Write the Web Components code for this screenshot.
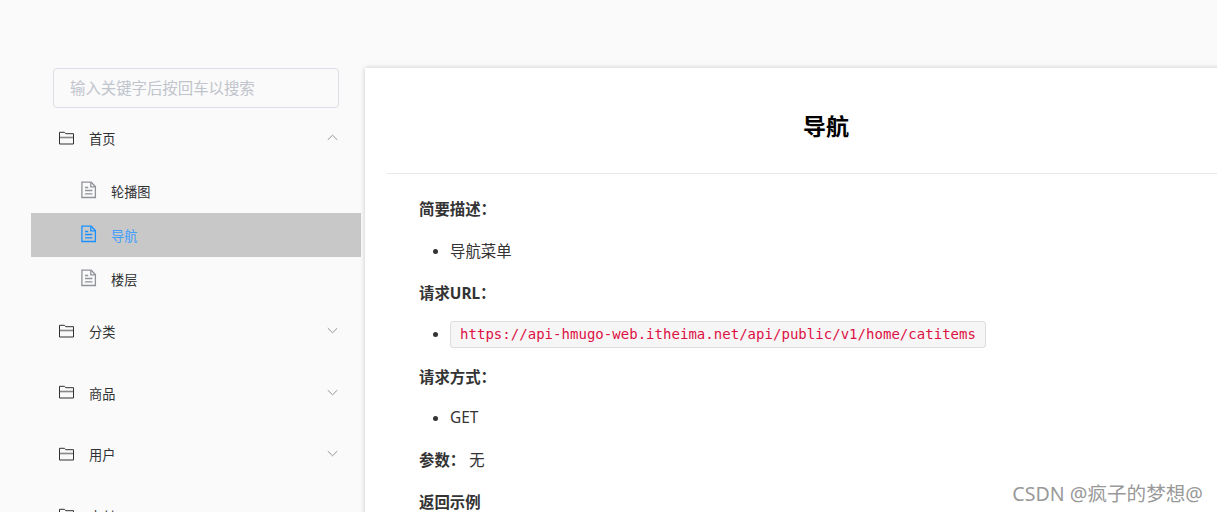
<!DOCTYPE html>
<html lang="zh-CN">
<head>
<meta charset="utf-8">
<title>导航</title>
<style>
  html, body {
    margin: 0;
    height: 100%;
    overflow: hidden;
  }
  body {
    background: #fafafa;
    color: #333;
    font-family: "Noto Sans", "Noto Sans CJK SC", sans-serif;
  }
</style>
</head>
<body>
<doc-app></doc-app>

<script>
const FOLDER = `<svg width="16" height="14" viewBox="0 0 16 14" fill="none">
  <path d="M1 6.5h13.5" stroke="#888" stroke-width="1.6"/>
  <path d="M.5 13V1.3h5l1.2 1.4h7.8V13z" stroke="#303133"/>
</svg>`;

const PAGE = `<svg width="16" height="18" viewBox="0 0 16 18" fill="none" stroke="currentColor" stroke-width="1.3">
  <path d="M.9 1.2h9.3l4.2 4.3v11H.9z"/>
  <path d="M9.8 1.5v4.3h4.5M4 6.5h3.2M4 9.5h7.4M4 12.8h7.4"/>
</svg>`;

class SearchBox extends HTMLElement {
  constructor() {
    super();
    this.attachShadow({ mode: 'open' });
    this.shadowRoot.innerHTML = `
      <style>
      :host {
        display: block;
        margin: 0 22px;
      }
      input {
        display: block;
        box-sizing: border-box;
        width: 286px;
        height: 40px;
        padding: 0 16px 3px;
        border: 1px solid #dcdfe6;
        border-radius: 4px;
        background: transparent;
        font: 15.4px "Noto Sans CJK SC", sans-serif;
      }
      input::placeholder {
        color: #c0c4cc;
      }
      </style>
      <input type="text" placeholder="${this.getAttribute('placeholder')}">
    `;
  }
}

class MenuGroup extends HTMLElement {
  constructor() {
    super();
    this.attachShadow({ mode: 'open' });
    const arrow = this.hasAttribute('open') ? 'M.8 5.8 5.5 1.2l4.7 4.6' : 'M.8 1.2l4.7 4.6 4.7-4.6';
    this.shadowRoot.innerHTML = `
      <style>
      :host {
        display: block;
      }
      .title {
        display: flex;
        align-items: center;
        box-sizing: border-box;
        height: 61.5px;
        padding: 0 23px 2px 28px;
        font-size: 13.2px;
        color: #303133;
      }
      :host([open]) .title {
        height: 61px;
      }
      .title span {
        flex: 1;
        margin: 2px 0 0 14px;
      }
      </style>
      <div class="title">
        ${FOLDER}
        <span>${this.getAttribute('label')}</span>
        <svg width="11" height="7" viewBox="0 0 11 7" fill="none" stroke="#909399"><path d="${arrow}"/></svg>
      </div>
      <slot></slot>
    `;
  }
}

class MenuEntry extends HTMLElement {
  constructor() {
    super();
    this.attachShadow({ mode: 'open' });
    this.shadowRoot.innerHTML = `
      <style>
      :host {
        display: flex;
        align-items: center;
        height: 44px;
        padding-left: 50px;
        font-size: 13.2px;
        color: #303133;
      }
      :host([active]) {
        background: #c8c8c8;
        color: #409eff;
      }
      .icon {
        display: flex;
        margin: 0 14px 2px 0;
        color: #909399;
      }
      :host([active]) .icon {
        color: #1890ff;
      }
      .text {
        margin-top: 1px;
      }
      </style>
      <span class="icon">${PAGE}</span>
      <span class="text"><slot></slot></span>
    `;
  }
}

class DocArticle extends HTMLElement {
  constructor() {
    super();
    this.attachShadow({ mode: 'open' });
    this.shadowRoot.innerHTML = `
      <style>
      :host {
        display: block;
        box-sizing: border-box;
        height: 700px;
        padding-left: 22px;
        background: #fff;
        box-shadow: 0 0 5px rgba(0, 0, 0, .2);
        font-size: 15.4px;
      }
      h1 {
        margin: 0;
        height: 106px;
        box-sizing: border-box;
        border-bottom: 1px solid #e8e8e8;
        text-align: center;
        font-size: 23px;
        line-height: 117px;
        color: #000;
      }
      .content {
        padding: 14px 0 0 32px;
      }
      </style>
      <h1>${this.getAttribute('heading')}</h1>
      <div class="content"><slot></slot></div>
    `;
  }
}

class DocLine extends HTMLElement {
  constructor() {
    super();
    this.attachShadow({ mode: 'open' });
    this.shadowRoot.innerHTML = `
      <style>
      :host {
        display: flex;
        align-items: center;
        height: 41.8px;
      }
      :host([bullet])::before {
        content: "";
        width: 5px;
        height: 5px;
        margin: 1px 12px 0 14px;
        border-radius: 50%;
        background: #333;
      }
      .text {
        white-space: pre;
      }
      </style>
      <b><slot name="label"></slot></b>
      <div class="text"><slot></slot></div>
    `;
  }
}

class InlineCode extends HTMLElement {
  constructor() {
    super();
    this.attachShadow({ mode: 'open' });
    this.shadowRoot.innerHTML = `
      <style>
      :host {
        display: block;
        box-sizing: border-box;
        height: 27px;
        padding: 0 9px;
        border: 1px solid #ddd;
        border-radius: 3px;
        background: #f6f6f6;
        color: #d14;
        font: 14px/25px "DejaVu Sans Mono", monospace;
        letter-spacing: .03px;
        white-space: nowrap;
      }
      </style>
      <slot></slot>
    `;
  }
}

class DocApp extends HTMLElement {
  constructor() {
    super();
    this.attachShadow({ mode: 'open' });
    this.shadowRoot.innerHTML = `
      <style>
      :host {
        display: flex;
        height: 512px;
        box-sizing: border-box;
        padding: 68px 0 0 31px;
        overflow: hidden;
      }
      aside {
        flex: none;
        width: 330px;
        margin-right: 4px;
      }
      doc-article {
        flex: none;
        width: 900px;
      }
      .mark {
        position: absolute;
        right: 14px;
        bottom: 5px;
        font-size: 19.6px;
        color: #999;
        text-shadow: -1px -1px 0 #fff;
      }
      </style>
      <aside>
        <search-box placeholder="输入关键字后按回车以搜索"></search-box>
        <menu-group label="首页" open>
          <menu-entry>轮播图</menu-entry>
          <menu-entry active>导航</menu-entry>
          <menu-entry>楼层</menu-entry>
        </menu-group>
        <menu-group label="分类"></menu-group>
        <menu-group label="商品"></menu-group>
        <menu-group label="用户"></menu-group>
        <menu-group label="支付"></menu-group>
      </aside>
      <doc-article heading="导航">
        <doc-line><span slot="label">简要描述：</span></doc-line>
        <doc-line bullet>导航菜单</doc-line>
        <doc-line><span slot="label">请求URL：</span></doc-line>
        <doc-line bullet><inline-code>https://api-hmugo-web.itheima.net/api/public/v1/home/catitems</inline-code></doc-line>
        <doc-line><span slot="label">请求方式：</span></doc-line>
        <doc-line bullet>GET</doc-line>
        <doc-line><span slot="label">参数：</span> 无</doc-line>
        <doc-line><span slot="label">返回示例</span></doc-line>
      </doc-article>
      <div class="mark">CSDN @疯子的梦想@</div>
    `;
  }
}

customElements.define('search-box', SearchBox);
customElements.define('menu-group', MenuGroup);
customElements.define('menu-entry', MenuEntry);
customElements.define('doc-article', DocArticle);
customElements.define('doc-line', DocLine);
customElements.define('inline-code', InlineCode);
customElements.define('doc-app', DocApp);
</script>
</body>
</html>
